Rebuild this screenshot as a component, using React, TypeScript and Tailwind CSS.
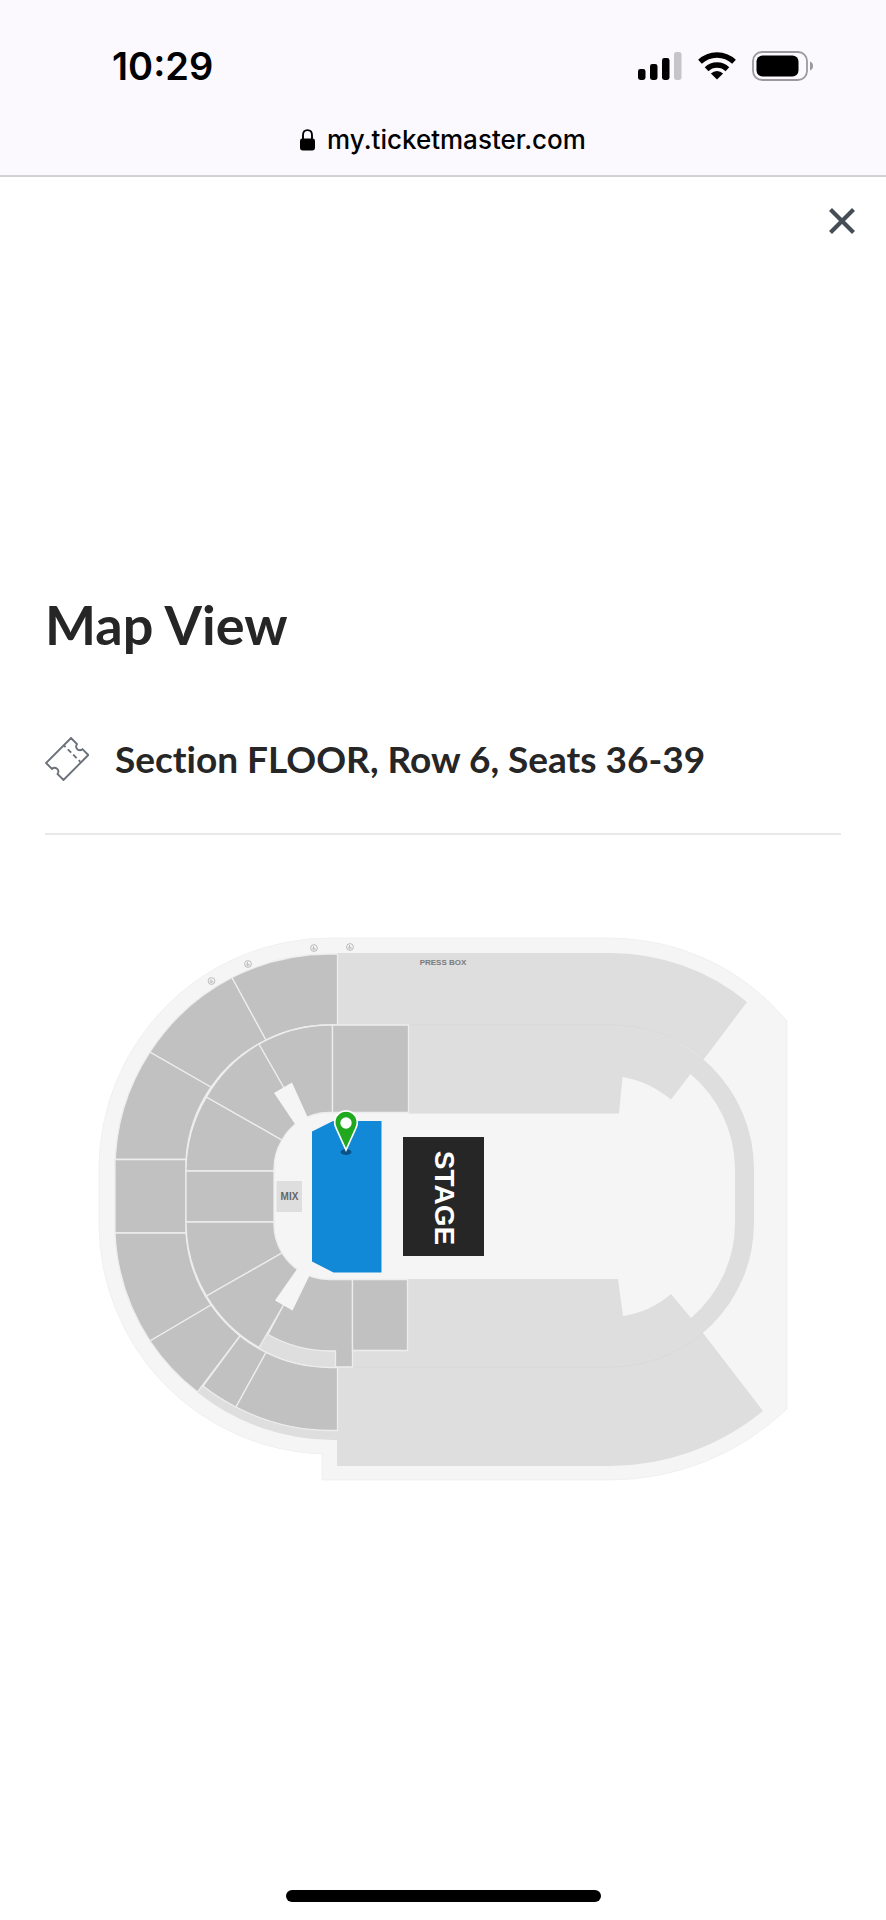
import React from "react";

function SignalIcon() {
  return (
    <svg viewBox="0 0 44 28" className="h-7 w-11" aria-label="Signal" role="img">
      <rect x="0" y="17" width="7.5" height="11" rx="2.4" />
      <rect x="12" y="12" width="7.5" height="16" rx="2.4" />
      <rect x="24" y="6" width="7.5" height="22" rx="2.4" />
      <rect x="36" y="0" width="7.5" height="28" rx="2.4" fill="#c6c4c9" />
    </svg>
  );
}

function WifiIcon() {
  return (
    <svg viewBox="0 0 38 28" className="h-7 w-[38px]" aria-label="Wi-Fi" role="img">
      <g fill="none" stroke="#000" strokeWidth="5.4">
        <path d="M2 9.8A24.5 24.5 0 0 1 36 9.8" />
        <path d="M8.6 17.2A15 15 0 0 1 29.4 17.2" />
      </g>
      <path d="M19 27.6L12.9 21.6A8.6 8.6 0 0 1 25.1 21.6Z" />
    </svg>
  );
}

function BatteryIcon() {
  return (
    <svg viewBox="0 0 62 30" className="h-[30px] w-[62px]" aria-label="Battery" role="img">
      <rect x="1" y="1" width="54" height="28" rx="9" fill="none" stroke="#9b999e" strokeWidth="1.8" />
      <rect x="4.5" y="4.5" width="42" height="21" rx="6" />
      <path d="M58 10.5C60.2 11 61 13 61 15C61 17 60.2 19 58 19.5Z" fill="#9b999e" />
    </svg>
  );
}

function LockIcon() {
  return (
    <svg viewBox="0 0 15 22" className="h-[22px] w-[15px]" aria-hidden="true">
      <rect x="0" y="9.5" width="15" height="12" rx="2.4" />
      <path d="M3 11V6.2C3 3 4.8 1.1 7.5 1.1S12 3 12 6.2V11" fill="none" stroke="#000" strokeWidth="1.9" />
    </svg>
  );
}

function TicketIcon() {
  return (
    <svg viewBox="0 0 44 44" className="size-11 shrink-0" fill="none" stroke="#6a7178" strokeWidth="1.9" aria-hidden="true">
      <path d="M26 1L32 7C30.600 9 31 11.500 32.800 12.600C34.500 13.500 36.200 13.200 37.500 12.200L43.300 18L18.500 43L12.500 37C14 35 13.500 32.800 12 31.700C10.300 30.500 8.300 30.800 7 32L1 26Z" />
      <path d="M19 8.500L20.600 10.100M22.800 12.300L26.200 15.700M28.200 17.700L31.600 21.100M33.700 23.200L35.300 24.800" />
    </svg>
  );
}

const suitePins = [
  [211.5, 981],
  [248, 964],
  [314, 948],
  [350, 947],
];

function SeatMap() {
  return (
    <svg viewBox="98 937 690 544" className="w-full" role="img" aria-label="Seat map" fontFamily="'Liberation Sans', Arial, sans-serif">
      {/* Building footprint */}
      <path
        d="M99 1169A231 231 0 0 1 330 938H610A231 231 0 0 1 787 1021V1409A257 257 0 0 1 610 1480H322V1454A231 231 0 0 1 99 1223Z"
        fill="#f5f5f5"
        stroke="#ececec"
        strokeWidth="0.7"
      />

      {/* Closed sections */}
      <g fill="#dedede">
        <path d="M337 953H610A216 216 0 0 1 747 1002L704 1059A144 144 0 0 0 610 1025H337Z" />
        <path d="M408 1025H610A144 144 0 0 1 754 1169V1223A144 144 0 0 1 610 1367H352V1279H618L623 1316Q650 1312 671 1294L691 1318A125 125 0 0 0 735 1223V1169A125 125 0 0 0 690.500 1074L671 1099.500Q648 1081 622.500 1077L619 1113.500H408Z" />
        <path d="M337 1367H610A144 144 0 0 0 703 1333L763 1411A243 243 0 0 1 610 1466H337Z" />
        <path d="M197 1392L203 1384L337 1425V1440A217 217 0 0 1 197 1392Z" />
        <path d="M259 1348L268 1333L336 1348V1367H330A144 144 0 0 1 259 1348Z" />
      </g>
      <path
        d="M409 1025H610A144 144 0 0 1 704 1059M352 1367H610A144 144 0 0 0 703 1333"
        fill="none"
        stroke="#d7d7d7"
        strokeWidth="0.9"
      />

      {/* Open sections, outer ring and inner ring */}
      <g fill="#c1c1c1" stroke="#ededed" strokeWidth="1.3">
        <path d="M115 1159.500V1169A215 215 0 0 1 150 1052L211 1087A144 144 0 0 0 186 1159.500Z" />
        <path d="M150 1052A215 215 0 0 1 232 977.500L266 1040A144 144 0 0 0 211 1087Z" />
        <path d="M232 977.500A215 215 0 0 1 330 954H337.500V1025H330A144 144 0 0 0 266 1040Z" />
        <path d="M115 1159.500H186V1233H115Z" />
        <path d="M115 1233H186A144 144 0 0 0 211 1305L150 1341A215 215 0 0 1 115 1233Z" />
        <path d="M150 1341L211 1305A144 144 0 0 0 240 1336L197.500 1392A215 215 0 0 1 150 1341Z" />
        <path d="M240 1336A144 144 0 0 0 266 1352.500L236 1407A207 207 0 0 1 203 1386Z" />
        <path d="M266 1352.500A144 144 0 0 0 330 1367.500H337.500V1430.500H330A207 207 0 0 1 236 1407Z" />

        <path d="M186 1171V1169A144 144 0 0 1 206.500 1097L282 1140A56 56 0 0 0 274 1169V1171Z" />
        <path d="M206.500 1097A144 144 0 0 1 259 1044L283 1086L298 1122A56 56 0 0 0 282 1140Z" />
        <path d="M259 1044A144 144 0 0 1 330 1025H332.500V1112.500H330A56 56 0 0 0 298 1122L283 1086Z" />
        <path d="M332.500 1025H408.500V1112.500H332.500Z" />
        <path d="M186 1171H274V1222H186Z" />
        <path d="M186 1222H274A56 56 0 0 0 282 1253L206.500 1296A144 144 0 0 1 186 1222Z" />
        <path d="M282 1253A56 56 0 0 0 298 1270L283 1306L259 1347.500A144 144 0 0 1 206.500 1296Z" />
        <path d="M298 1270A56 56 0 0 0 330 1279.500H352.500V1367H335.500V1351H330A128 128 0 0 1 268 1334.500L283 1306Z" />
        <path d="M352.500 1279.500H407.500V1350.500H352.500Z" />
      </g>

      {/* Aisle cut-outs */}
      <path d="M274 1093L292 1082.500L308 1118L314 1130H300L296 1125.500Z" fill="#f5f5f5" />
      <path d="M275 1300.500L292.500 1310.500L309.500 1275.500L314 1262H302L297 1269Z" fill="#f5f5f5" />

      {/* Suites */}
      {suitePins.map(([x, y]) => (
        <g key={x} fill="none" stroke="#a3a3a3" strokeWidth="0.7">
          <circle cx={x} cy={y} r="3.4" />
          <path d={`M${x - 0.5} ${y - 2}V${y + 0.3}H${x + 1}L${x + 1.6} ${y + 1.5}M${x - 1.3} ${y}A1.3 1.3 0 0 0 ${x + 0.6} ${y + 1.6}`} />
        </g>
      ))}
      <text x="443" y="965" textAnchor="middle" fontSize="8" fontWeight="700" fill="#7a7a7a">PRESS BOX</text>

      {/* Floor */}
      <rect x="276.500" y="1181" width="25.500" height="31" fill="#dedede" />
      <text x="289.500" y="1200" textAnchor="middle" fontSize="10" fontWeight="700" fill="#666">MIX</text>
      <path d="M312 1131.500L333 1121H381.500V1272.500H333.500L312 1261.500Z" fill="#1289d7" />
      <rect x="403" y="1137" width="81" height="119" fill="#262626" />
      <text transform="translate(435 1198) rotate(90)" textAnchor="middle" fontSize="28" fontWeight="700" fill="#fff">STAGE</text>

      {/* Selected seats */}
      <ellipse cx="346" cy="1152" rx="5.500" ry="3" fill="#0b5287" />
      <path
        d="M346 1150L336.500 1129C334.600 1125 334.300 1122 335 1119.500A11.300 11.300 0 0 1 357 1119.500C357.700 1122 357.400 1125 355.500 1129Z"
        fill="#20a81f"
        stroke="#fff"
        strokeWidth="1.700"
      />
      <circle cx="346" cy="1123" r="5.700" fill="#fff" />
    </svg>
  );
}

export default function App() {
  return (
    <div className="flex min-h-screen flex-col bg-white font-['Inter',sans-serif] text-black">
      <header className="border-b-2 border-[#d2d1d4] bg-[#fbf9fe]">
        <div className="flex items-center justify-between pt-11 pr-[72px] pl-[112px]">
          <time className="text-[38px] leading-[44px] font-semibold">10:29</time>
          <div className="flex items-center gap-4">
            <SignalIcon />
            <WifiIcon />
            <BatteryIcon />
          </div>
        </div>
        <div className="flex h-[87px] items-center justify-center gap-3 pt-[17px]">
          <LockIcon />
          <span className="text-[26px] leading-8 font-medium">my.ticketmaster.com</span>
        </div>
      </header>

      <div className="flex justify-end px-[22px] pt-[22px]">
        <button type="button" aria-label="Close" className="grid size-11 place-items-center">
          <svg viewBox="0 0 26 26" className="size-[26px]" stroke="#454d56" strokeWidth="4.2" aria-hidden="true">
            <path d="M1.500 1.500L24.500 24.500M24.500 1.500L1.500 24.500" />
          </svg>
        </button>
      </div>

      <main className="flex-1 px-[45px] pt-[350px] font-['Lato',sans-serif] text-[#262626] [font-variant-ligatures:none]">
        <h1 className="text-[54px] leading-[64px] font-bold">Map View</h1>
        <div className="mt-[72px] flex items-center gap-[26px] border-b-2 border-[#e8e9e9] pb-11">
          <TicketIcon />
          <h2 className="text-[37px] leading-[60px] font-bold">Section FLOOR, Row 6, Seats 36-39</h2>
        </div>
        <div className="px-[53px] pt-[102px]">
          <SeatMap />
        </div>
      </main>

      <footer className="flex justify-center pb-[18px]">
        <div className="h-3 w-[315px] rounded-full bg-black" />
      </footer>
    </div>
  );
}
